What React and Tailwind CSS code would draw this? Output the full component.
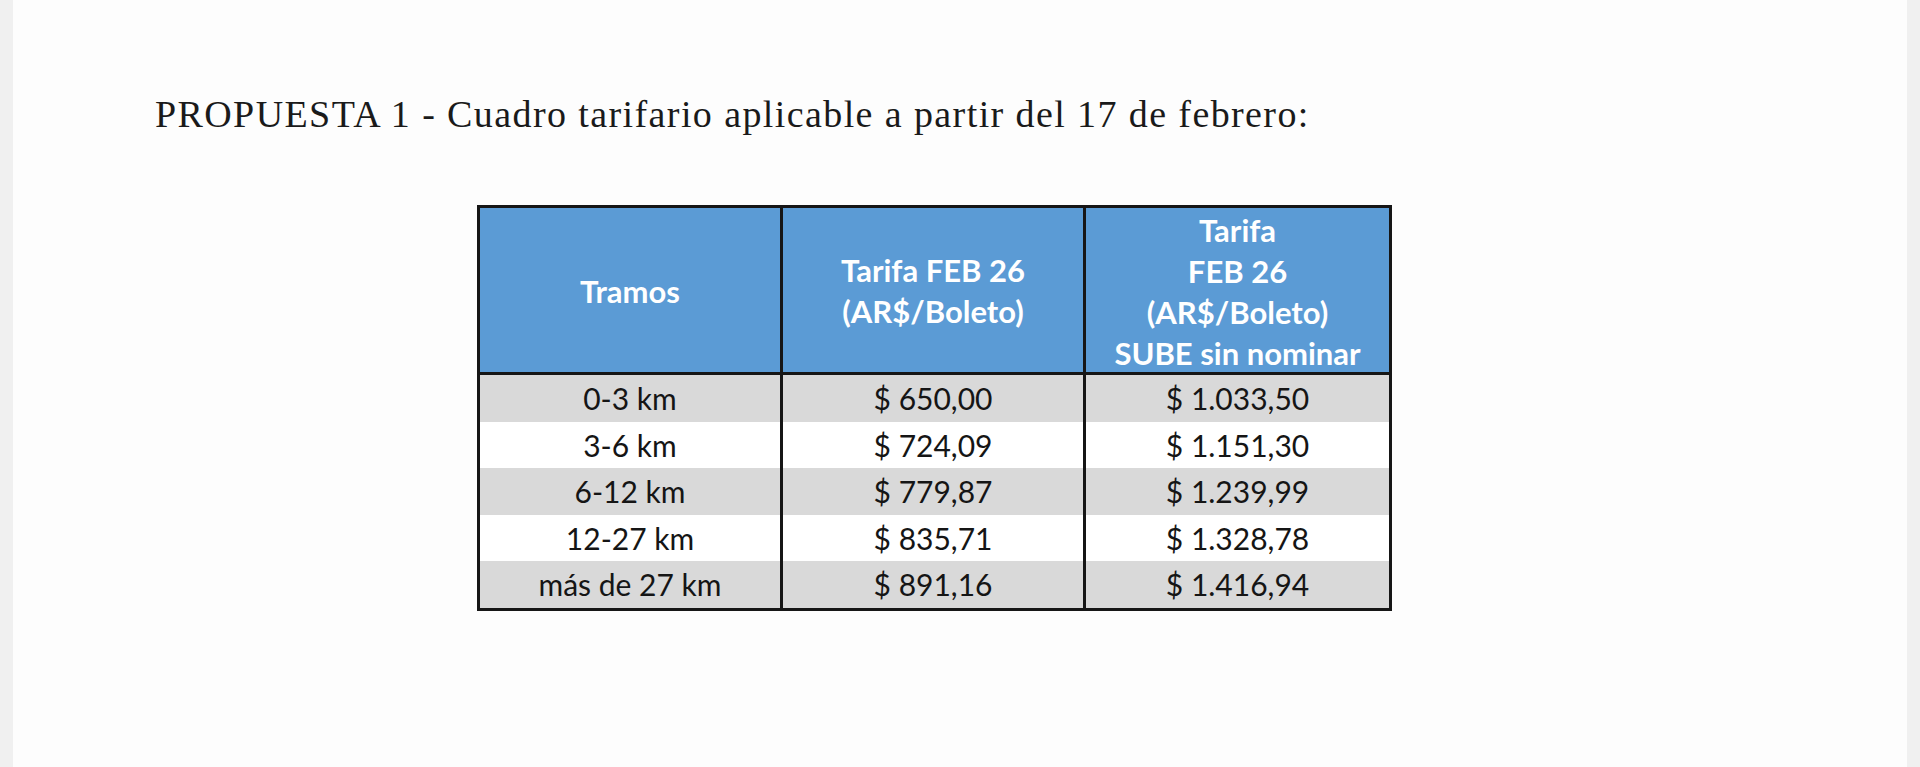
import React from "react";

const rows = [
  ["0-3 km", "$ 650,00", "$ 1.033,50"],
  ["3-6 km", "$ 724,09", "$ 1.151,30"],
  ["6-12 km", "$ 779,87", "$ 1.239,99"],
  ["12-27 km", "$ 835,71", "$ 1.328,78"],
  ["más de 27 km", "$ 891,16", "$ 1.416,94"],
];

function App() {
  return (
    <div className="min-h-[767px] flex bg-[#fdfdfd]">
      <div className="w-[13px] bg-[#f0f0f0]" />
      <div className="flex-1 flex flex-col pt-[93px]">
        {/* Titulo */}
        <h1 className="pl-[142px] text-[38px] leading-[42px] text-[#1a1a1a] font-['Liberation_Serif',serif] tracking-[1.4px]">
          PROPUESTA 1 - Cuadro tarifario aplicable a partir del 17 de febrero:
        </h1>

        {/* Cuadro */}
        <div className="ml-[464px] mt-[70px] w-[915px] border-[3px] border-[#161616] font-['Lato',sans-serif] text-[30px]">
          <div className="grid grid-cols-3 h-[167px] bg-[#5b9bd5] border-b-[3px] border-[#161616] text-white font-bold text-[31px] leading-[41px] text-center">
            <div className="flex items-center justify-center border-r-[3px] border-[#161616]">
              Tramos
            </div>
            <div className="flex flex-col items-center justify-center border-r-[3px] border-[#161616]">
              <span>Tarifa FEB 26</span>
              <span>(AR$/Boleto)</span>
            </div>
            <div className="flex flex-col items-center justify-center pt-[2px]">
              <span>Tarifa</span>
              <span>FEB 26</span>
              <span>(AR$/Boleto)</span>
              <span>SUBE sin nominar</span>
            </div>
          </div>
          {rows.map((r, i) => (
            <div
              key={r[0]}
              className={
                "grid grid-cols-3 h-[46.6px] text-[#151515] text-center leading-[46px] " +
                (i % 2 === 0 ? "bg-[#d9d9d9]" : "bg-white")
              }
            >
              <div className="border-r-[3px] border-[#161616]">{r[0]}</div>
              <div className="border-r-[3px] border-[#161616]">{r[1]}</div>
              <div>{r[2]}</div>
            </div>
          ))}
        </div>
      </div>
      <div className="w-[13px] bg-[#f0f0f0]" />
    </div>
  );
}

export default App;
